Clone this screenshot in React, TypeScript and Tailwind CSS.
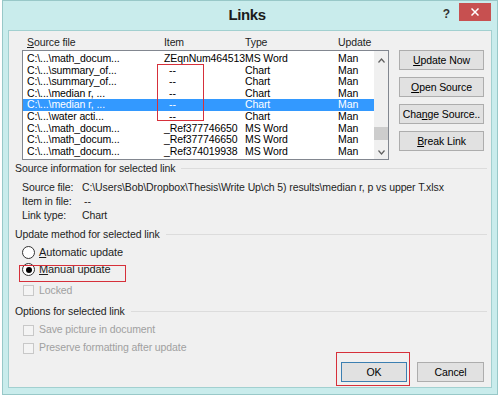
import type { ReactNode } from "react";

type Row = { file: string; item: string; type: string; update: string; dash?: boolean };

const rows: Row[] = [
  { file: "C:\\...\\math_docum...", item: "ZEqnNum464513", type: "MS Word", update: "Man" },
  { file: "C:\\...\\summary_of...", item: "--", type: "Chart", update: "Man", dash: true },
  { file: "C:\\...\\summary_of...", item: "--", type: "Chart", update: "Man", dash: true },
  { file: "C:\\...\\median r, ...", item: "--", type: "Chart", update: "Man", dash: true },
  { file: "C:\\...\\median r, ...", item: "--", type: "Chart", update: "Man", dash: true },
  { file: "C:\\...\\water acti...", item: "--", type: "Chart", update: "Man", dash: true },
  { file: "C:\\...\\math_docum...", item: "_Ref377746650", type: "MS Word", update: "Man" },
  { file: "C:\\...\\math_docum...", item: "_Ref377746650", type: "MS Word", update: "Man" },
  { file: "C:\\...\\math_docum...", item: "_Ref374019938", type: "MS Word", update: "Man" },
];

function Btn({ children }: { children: ReactNode }) {
  return (
    <button className="h-[20px] w-[85px] overflow-hidden whitespace-nowrap border border-[#adadad] bg-[#e1e1e1] leading-[18px] text-black">
      {children}
    </button>
  );
}

function Heading({ text }: { text: string }) {
  return (
    <div className="flex h-[12px] items-center gap-[6px] pl-[6px] pr-[4px] leading-[12px] text-[#1e1e1e]">
      <span>{text}</span>
      <div className="h-px flex-1 bg-[#dcdcdc]" />
    </div>
  );
}

function Check({ label }: { label: string }) {
  return (
    <div className="flex h-[18px] items-center gap-[5px] pl-[14px] text-[#a0a0a0]">
      <span className="h-[11px] w-[11px] border border-[#c8c8c8] bg-[#f4f4f4]" />
      <span>{label}</span>
    </div>
  );
}

export default function App() {
  return (
    <div className="h-[400px] w-[500px] bg-white pl-[2px] font-['Liberation_Sans',sans-serif] text-[10.5px] tracking-[-0.1px] text-black">
      <div className="flex h-[395px] w-[496px] flex-col border border-[#98c8c8] bg-[#c9ecec]">
        {/* title bar */}
        <div className="flex h-[29px] items-start pr-[6px]">
          <div className="flex-1" />
          <div className="pt-[6px] text-[15px] font-bold leading-[16px] tracking-[-0.4px] text-[#1b1b1b]">
            Links
          </div>
          <div className="flex flex-1 justify-end pt-[2px]">
            <span className="mr-[9px] pt-[5px] text-[12px] font-bold leading-[12px] text-[#333]">?</span>
            <div className="flex h-[18px] w-[32px] items-center justify-center bg-[#c75050]">
              <svg width="8" height="8" viewBox="0 0 8 8">
                <path d="M0.5 0.5 7.5 7.5 M7.5 0.5 0.5 7.5" stroke="white" strokeWidth="1.5" />
              </svg>
            </div>
          </div>
        </div>

        {/* client area */}
        <div className="relative mx-[5px] flex flex-1 flex-col border border-[#a2d0d0] bg-[#f0f0f0] pt-[5px]">
          <div className="flex pl-[13px]">
            <div className="flex w-[367px] flex-col">
              <div className="flex h-[14px] pl-[1px] leading-[12px] text-[#1e1e1e]">
                <span className="w-[141px] pl-[4px]">
                  <span className="underline">S</span>ource file
                </span>
                <span className="w-[81px]">Item</span>
                <span className="w-[93px]">Type</span>
                <span>Update</span>
              </div>
              <div className="flex h-[110px] border border-[#828790] bg-white">
                <div className="flex w-[351px] flex-col pt-[2px]">
                  {rows.map((r, i) => {
                    const sel = i === 4;
                    return (
                      <div
                        key={i}
                        className={`flex h-[11.6px] items-center whitespace-nowrap leading-[11.6px] ${
                          sel ? "bg-[#3399ff] text-white" : "text-black"
                        }`}
                      >
                        <span className="w-[141px] pl-[4px]">{r.file}</span>
                        <span className={`w-[81px] ${r.dash ? "pl-[5px]" : ""}`}>{r.item}</span>
                        <span className="w-[93px]">{r.type}</span>
                        <span>{r.update}</span>
                      </div>
                    );
                  })}
                </div>
                <div className="flex w-[14px] flex-col items-center bg-[#f0f0f0]">
                  <svg className="mt-[7px]" width="7" height="5" viewBox="0 0 7 5">
                    <path d="M0.5 4.5 3.5 1 6.5 4.5" stroke="#606060" strokeWidth="1.2" fill="none" />
                  </svg>
                  <div className="mt-[64px] h-[13px] w-[14px] bg-[#cdcdcd]" />
                  <svg className="mt-[10px]" width="7" height="5" viewBox="0 0 7 5">
                    <path d="M0.5 0.5 3.5 4 6.5 0.5" stroke="#606060" strokeWidth="1.2" fill="none" />
                  </svg>
                </div>
              </div>
            </div>
            <div className="ml-[10px] flex flex-col gap-[7px] pt-[14px]">
              <Btn>
                <span className="underline">U</span>pdate Now
              </Btn>
              <Btn>
                <span className="underline">O</span>pen Source
              </Btn>
              <Btn>
                Cha<span className="underline">n</span>ge Source..
              </Btn>
              <Btn>
                <span className="underline">B</span>reak Link
              </Btn>
            </div>
          </div>

          <div className="mt-[2px]">
            <Heading text="Source information for selected link" />
          </div>
          <div className="mt-[6px] flex flex-col pl-[13px] leading-[14px] text-[#1e1e1e]">
            <div className="flex">
              <span className="w-[60px]">Source file:</span>
              <span>C:\Users\Bob\Dropbox\Thesis\Write Up\ch 5) results\median r, p vs upper T.xlsx</span>
            </div>
            <div className="flex">
              <span className="w-[60px]">Item in file:</span>
              <span className="pl-[2px]">--</span>
            </div>
            <div className="flex">
              <span className="w-[60px]">Link type:</span>
              <span>Chart</span>
            </div>
          </div>

          <div className="mt-[6px]">
            <Heading text="Update method for selected link" />
          </div>
          <div className="mt-[4px] flex flex-col pl-[13px] text-[11px] text-[#1e1e1e]">
            <div className="flex h-[17px] items-center gap-[4px]">
              <span className="h-[13px] w-[13px] rounded-full border border-[#333] bg-white" />
              <span>
                <span className="underline">A</span>utomatic update
              </span>
            </div>
            <div className="flex h-[17px] items-center gap-[4px]">
              <span className="flex h-[13px] w-[13px] items-center justify-center rounded-full border border-[#333] bg-white">
                <span className="h-[6px] w-[6px] rounded-full bg-black" />
              </span>
              <span>
                <span className="underline">M</span>anual update
              </span>
            </div>
          </div>
          <div className="mt-[4px]">
            <div className="flex h-[17px] items-center gap-[5px] pl-[14px] text-[#a0a0a0]">
              <span className="h-[11px] w-[11px] border border-[#c8c8c8] bg-[#f4f4f4]" />
              <span>Locked</span>
            </div>
          </div>

          <div className="mt-[6px]">
            <Heading text="Options for selected link" />
          </div>
          <div className="mt-[4px] flex flex-col">
            <Check label="Save picture in document" />
            <Check label="Preserve formatting after update" />
          </div>

          <div className="mt-[5px] flex justify-end gap-[10px] pr-[7px]">
            <button className="h-[20px] w-[66px] border border-[#3c7fb1] bg-[#e1e1e1] leading-[18px]">OK</button>
            <button className="h-[20px] w-[67px] border border-[#adadad] bg-[#e1e1e1] leading-[18px]">Cancel</button>
          </div>

          {/* annotation boxes */}
          <div className="pointer-events-none absolute left-[148px] top-[33px] h-[57px] w-[47px] border border-[#d6303a]" />
          <div className="pointer-events-none absolute left-[10px] top-[234px] h-[17px] w-[107px] border border-[#d6303a]" />
          <div className="pointer-events-none absolute left-[327px] top-[321px] h-[34px] w-[74px] border border-[#d6303a]" />
        </div>
        <div className="h-[6px]" />
      </div>
    </div>
  );
}
